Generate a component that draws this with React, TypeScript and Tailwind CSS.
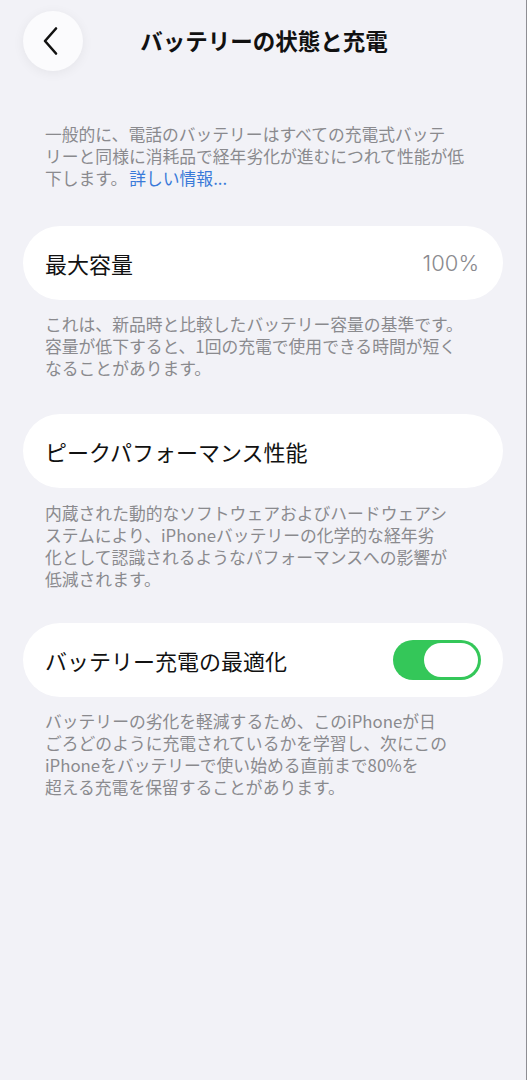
import React from "react";

const font = { fontFamily: '"Noto Sans CJK JP", "Noto Sans", sans-serif' };

function Desc({ lines }: { lines: string[] }) {
  return (
    <div className="px-[45px] text-[16.8px] leading-[22px] text-[#8a8a8e] whitespace-nowrap">
      {lines.map((l, i) => (
        <div key={i}>{l}</div>
      ))}
    </div>
  );
}

export default function App() {
  return (
    <div
      className="w-[527px] h-[1080px] bg-[#f2f2f7] border-r border-[#8e8e93] overflow-hidden"
      style={font}
    >
      {/* Header */}
      <div className="relative h-[83px] flex items-center justify-center">
        <div className="absolute left-[23px] top-[11px] w-[60px] h-[60px] rounded-full bg-[#fbfbfd] shadow-[0_2px_12px_rgba(0,0,0,0.06)] flex items-center justify-center">
          <svg width="20" height="30" viewBox="0 0 20 30" className="-ml-[4px]">
            <path d="M15 2.5 L4 15 L15 27.5" fill="none" stroke="#111" strokeWidth="2.6" strokeLinecap="round" strokeLinejoin="round" />
          </svg>
        </div>
        <div className="text-[22.5px] font-bold text-[#111] -mt-[1px] ml-[2px]">バッテリーの状態と充電</div>
      </div>

      <div className="mt-[40px]">
        <div className="px-[45px] text-[16.8px] leading-[22px] text-[#8a8a8e] whitespace-nowrap">
          <div>一般的に、電話のバッテリーはすべての充電式バッテ</div>
          <div>リーと同様に消耗品で経年劣化が進むにつれて性能が低</div>
          <div>
            下します。<span className="text-[#3a7ad9] ml-[2px]">詳しい情報...</span>
          </div>
        </div>
      </div>

      <div className="mt-[37px] mx-[23px] h-[74px] rounded-full bg-white flex items-center justify-between px-[22px]">
        <span className="text-[22px] text-[#111]">最大容量</span>
        <span
          className="text-[22px] text-[#8a8a8e] mr-[2px]"
          style={{ fontFamily: '"Inter", "Noto Sans", sans-serif', fontWeight: 300 }}
        >
          100%
        </span>
      </div>
      <div className="mt-[13px]">
        <Desc
          lines={[
            "これは、新品時と比較したバッテリー容量の基準です。",
            "容量が低下すると、1回の充電で使用できる時間が短く",
            "なることがあります。",
          ]}
        />
      </div>

      <div className="mt-[35px] mx-[23px] h-[74px] rounded-full bg-white flex items-center px-[22px]">
        <span className="text-[22px] text-[#111]">ピークパフォーマンス性能</span>
      </div>
      <div className="mt-[14px]">
        <Desc
          lines={[
            "内蔵された動的なソフトウェアおよびハードウェアシ",
            "ステムにより、iPhoneバッテリーの化学的な経年劣",
            "化として認識されるようなパフォーマンスへの影響が",
            "低減されます。",
          ]}
        />
      </div>

      <div className="mt-[33px] mx-[23px] h-[74px] rounded-full bg-white flex items-center justify-between pl-[22px] pr-[22px]">
        <span className="text-[22px] text-[#111]">バッテリー充電の最適化</span>
        <div className="w-[88px] h-[40px] rounded-full bg-[#34c759] flex items-center justify-end pr-[3px]">
          <div className="w-[54px] h-[34px] rounded-full bg-white" />
        </div>
      </div>
      <div className="mt-[13px]">
        <Desc
          lines={[
            "バッテリーの劣化を軽減するため、このiPhoneが日",
            "ごろどのように充電されているかを学習し、次にこの",
            "iPhoneをバッテリーで使い始める直前まで80%を",
            "超える充電を保留することがあります。",
          ]}
        />
      </div>
    </div>
  );
}
